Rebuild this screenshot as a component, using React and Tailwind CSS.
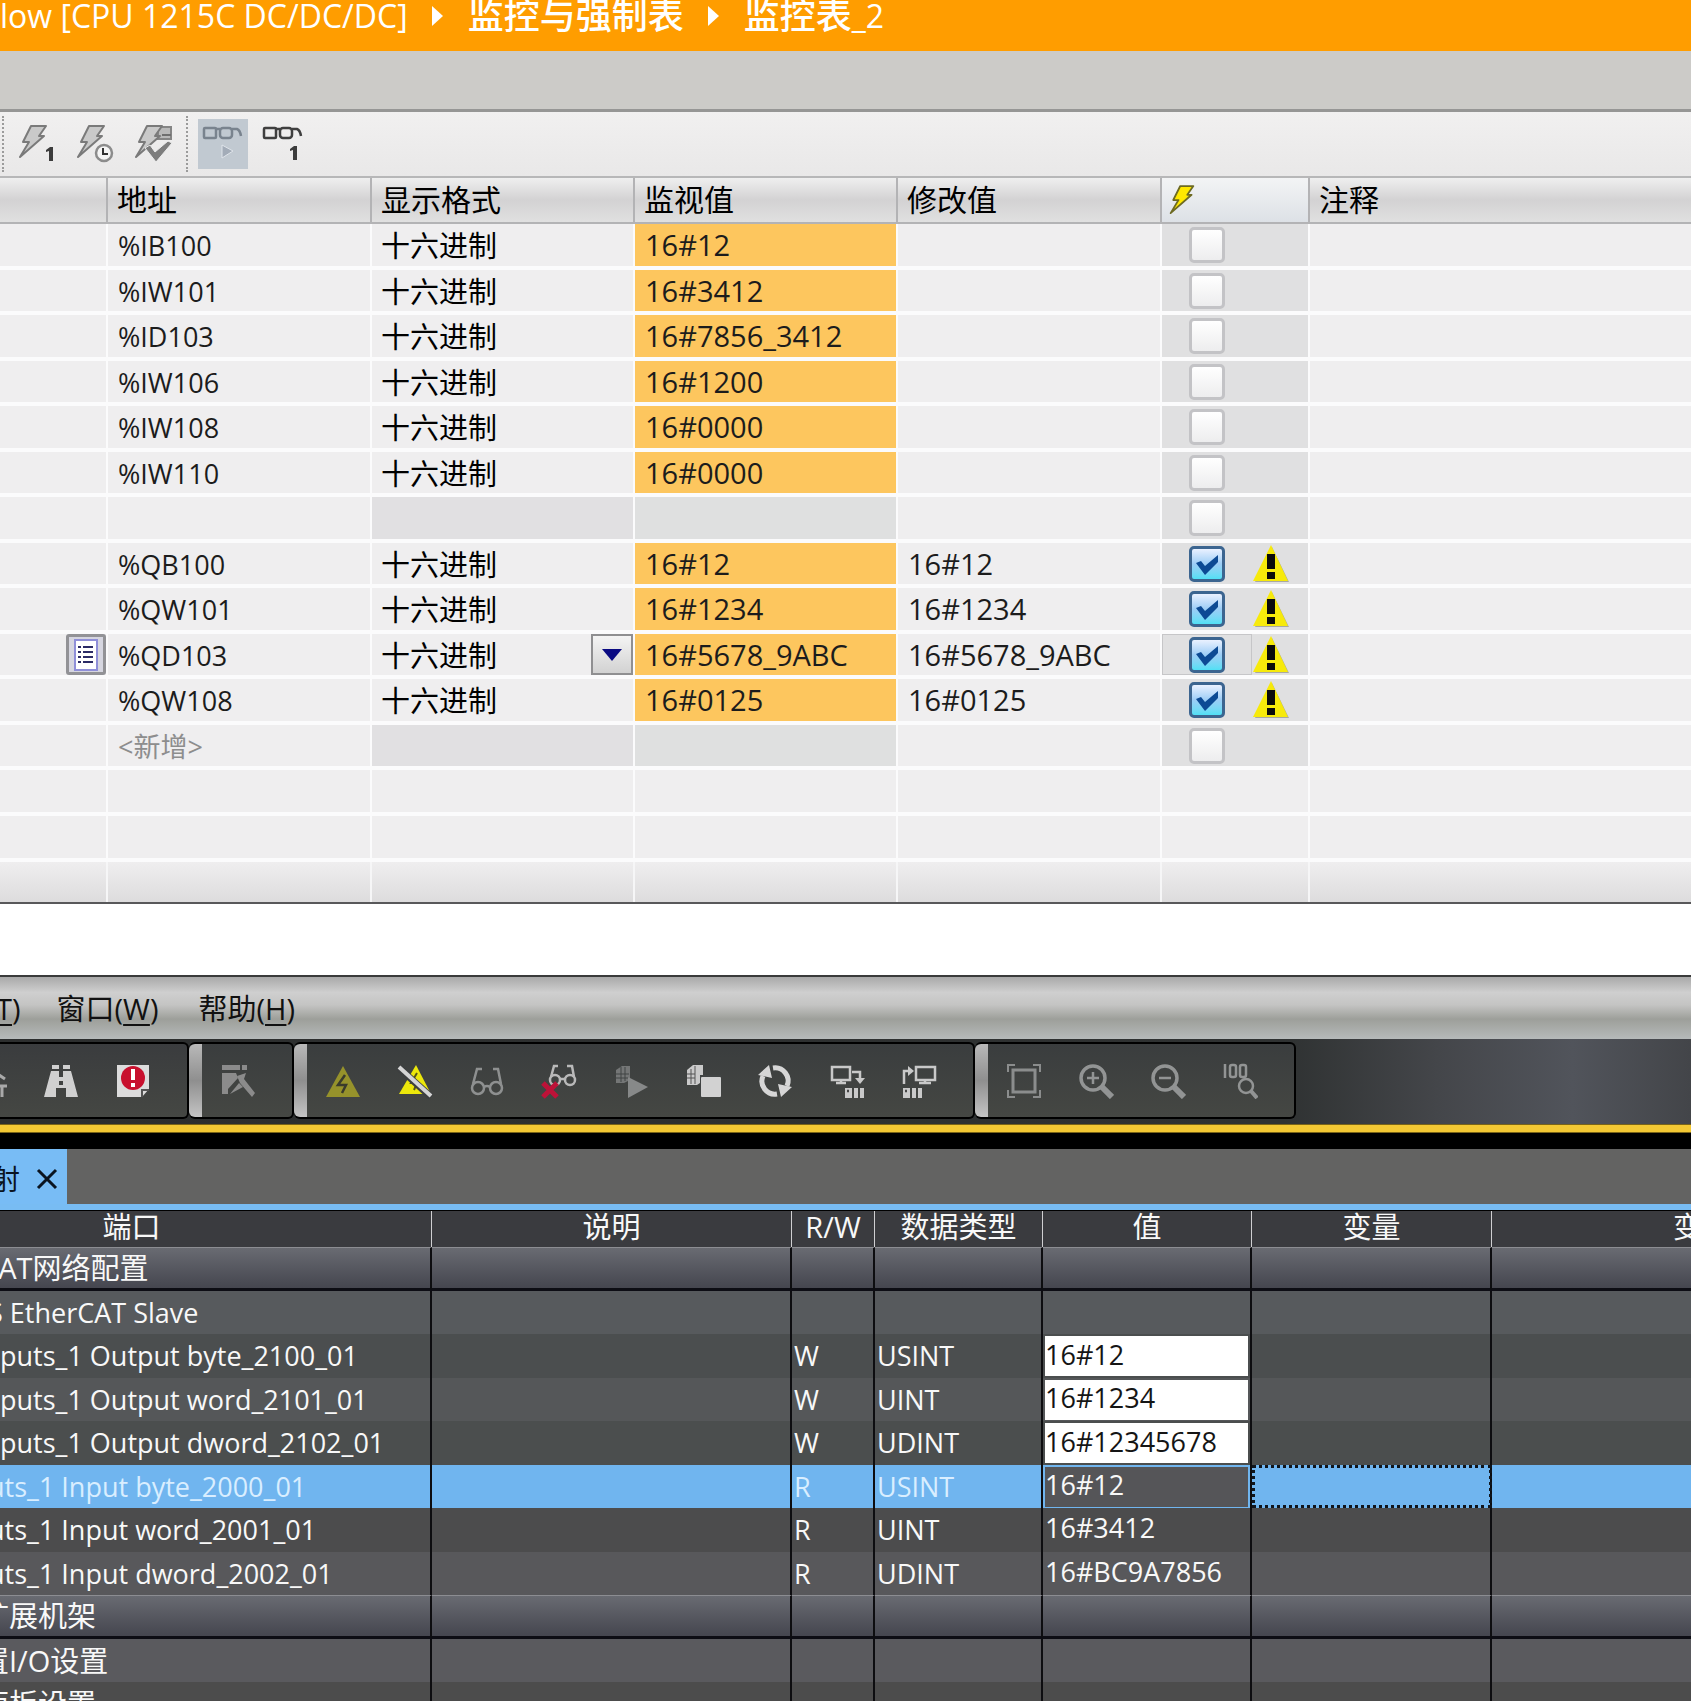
import React, { useState } from "react";

const WATCH_ROWS = [
	{ address: "%IB100", value: "16#12" },
	{ address: "%IW101", value: "16#3412" },
	{ address: "%ID103", value: "16#7856_3412" },
	{ address: "%IW106", value: "16#1200" },
	{ address: "%IW108", value: "16#0000" },
	{ address: "%IW110", value: "16#0000" },
	{ address: "", value: "" },
	{ address: "%QB100", value: "16#12", modify: "16#12" },
	{ address: "%QW101", value: "16#1234", modify: "16#1234" },
	{
		address: "%QD103",
		value: "16#5678_9ABC",
		modify: "16#5678_9ABC",
		active: true,
	},
	{ address: "%QW108", value: "16#0125", modify: "16#0125" },
	{ address: "<新增>", value: "", isNew: true },
];

const IO_ROWS = [
	{ port: "CAT网络配置", group: true, cjk: true },
	{ port: "S EtherCAT Slave", cut: true, bg: "bg-[#575a5d]" },
	{
		port: "puts_1 Output byte_2100_01",
		rw: "W",
		type: "USINT",
		value: "16#12",
		bg: "bg-[#4b4e4f]",
	},
	{
		port: "puts_1 Output word_2101_01",
		rw: "W",
		type: "UINT",
		value: "16#1234",
		bg: "bg-[#555759]",
	},
	{
		port: "puts_1 Output dword_2102_01",
		rw: "W",
		type: "UDINT",
		value: "16#12345678",
		bg: "bg-[#4b4e4e]",
	},
	{
		port: "uts_1 Input byte_2000_01",
		cut: true,
		rw: "R",
		type: "USINT",
		value: "16#12",
		bg: "bg-[#70b5ef]",
		selected: true,
	},
	{
		port: "uts_1 Input word_2001_01",
		cut: true,
		rw: "R",
		type: "UINT",
		value: "16#3412",
		bg: "bg-[#4c4c4d]",
	},
	{
		port: "uts_1 Input dword_2002_01",
		cut: true,
		rw: "R",
		type: "UDINT",
		value: "16#BC9A7856",
		bg: "bg-[#58585b]",
	},
	{ port: "扩展机架", group: true, cjk: true },
	{ port: "置I/O设置", cjk: true, bg: "bg-[#5a5a5e]" },
	{ port: "面板设置", cjk: true, bg: "bg-[#4c4c4c]" },
];

const BOLT = "M14 2 L29 2 L22 12 L27 12 L3 33 L12 18 L6 18 Z";

const Bolt = ({ fill = "#c9c9c9", stroke = "#7a7a7a" }) => (
	<path
		d={BOLT}
		fill={fill}
		stroke={stroke}
		strokeWidth="2"
		strokeLinejoin="round"
	/>
);

const One = ({ x, y }) => (
	<path
		d={`M${x} ${y + 3} L${x + 4} ${y} H${x + 7} V${y + 14} H${x + 3} V${y + 4} L${x} ${y + 5} Z`}
		fill="#3c3c3c"
	/>
);

const ModifyOnceIcon = () => (
	<svg width="40" height="40" viewBox="0 0 40 40">
		<Bolt />
		<One x={29} y={23} />
	</svg>
);

const ModifyTriggerIcon = () => (
	<svg width="40" height="40" viewBox="0 0 40 40">
		<Bolt />
		<circle cx="29" cy="29" r="8" fill="#f5f5f5" stroke="#8c8c8c" strokeWidth="2.5" />
		<path d="M28 24 V30 H33" fill="none" stroke="#333" strokeWidth="2" />
	</svg>
);

const EnableOutputsIcon = () => (
	<svg width="40" height="40" viewBox="0 0 40 40">
		<path d="M25 3 H38 V15 H25 Z" fill="#b9b9b9" stroke="#858585" strokeWidth="2" />
		<path d="M29 11 H38" stroke="#6f6f6f" strokeWidth="2" />
		<Bolt />
		<path d="M12 24 L17 21 L22 28 L35 17 L39 19 L23 38 Z" fill="#7d7d7d" stroke="#ececec" />
	</svg>
);

const Specs = ({ color }) => (
	<g fill="none" stroke={color} strokeWidth="2.5">
		<rect x="2" y="3" width="12" height="10" rx="1" />
		<path d="M14 4 H18" />
		<rect x="18" y="3" width="12" height="10" rx="3" />
		<path d="M30 4 H35 Q38 5 39 11" />
	</g>
);

const MonitorAllIcon = () => (
	<svg width="42" height="38" viewBox="0 0 42 38">
		<Specs color="#79838e" />
		<path d="M20 20 L31 26 L20 33 Z" fill="#a3acb8" stroke="#dfe4ea" />
	</svg>
);

const MonitorOnceIcon = () => (
	<svg width="42" height="38" viewBox="0 0 42 38">
		<Specs color="#3f3f3f" />
		<One x={28} y={21} />
	</svg>
);

const HeaderBoltIcon = () => (
	<svg width="28" height="36" viewBox="0 0 32 36">
		<Bolt fill="#ffe800" stroke="#6d6a22" />
	</svg>
);

const WarningIcon = () => (
	<svg width="38" height="40" viewBox="0 0 38 40">
		<path d="M20 3 L37 38 H3 Z" fill="#a9a9a0" />
		<path d="M19 1 L36 37 H1 Z" fill="#f7ea0b" />
		<path d="M15 10 H23 V25 H15 Z M15 28 H23 V35 H15 Z" fill="#0b0b0b" />
	</svg>
);

const CheckBox = ({ label, checked, onChange, active }) => (
	<label
		className={`flex h-full w-[90px] items-center border pl-[26px] ${
			active ? "border-[#c6c6c8]" : "border-transparent"
		}`}
	>
		<span className="relative block size-[36px]">
			<input
				type="checkbox"
				aria-label={label}
				checked={checked}
				onChange={onChange}
				className="block size-[36px] appearance-none rounded-[5px] border-[3px] border-[#c3c3c6] bg-linear-to-b from-white to-[#ededee] checked:border-[#3c6590] checked:from-[#eaf1ff] checked:via-[#9ccdf6] checked:to-[#4fe0f5]"
			/>
			{checked && (
				<svg
					className="pointer-events-none absolute inset-0"
					width="36"
					height="36"
					viewBox="0 0 36 36"
				>
					<path
						d="M7 17 L12 15 L16 20 L29 9 V16 L16 29 Z"
						fill="#0c4a94"
					/>
				</svg>
			)}
		</span>
	</label>
);

/* icons of the lower toolbar, all drawn on a 36px grid */
const TOOL_ICONS = {
	partial: (
		<path d="M28 12 L34 16 M26 23 H36 M31 23 V34" stroke="#a9a9a9" strokeWidth="3" />
	),
	find: (
		<path
			d="M9 2 H16 V6 H9 Z M20 2 H27 V6 H20 Z M8 8 H16 V14 H20 V8 H28 L35 34 H23 V25 H13 V34 H1 Z M16 18 V22 H20 V18 Z"
			fill="#d0d0d0"
			fillRule="evenodd"
		/>
	),
	error: (
		<g>
			<path d="M2 2 H34 V26 L27 34 H2 Z" fill="#dcdcdc" />
			<path d="M27 34 V27 H34" fill="none" stroke="#555" strokeWidth="2" />
			<circle cx="18" cy="15" r="12" fill="#c8102e" />
			<path d="M16 6 H20 V17 H16 Z M16 20 H20 V24 H16 Z" fill="#fff" />
		</g>
	),
	build: (
		<g fill="#8b8b8b">
			<path d="M2 2 H20 V7 H2 Z M22 2 H27 V7 H22 Z" />
			<path d="M2 10 H16 L18 15 L8 26 V31 H2 Z" />
			<path d="M10 31 L19 20 L23 24 Z" />
			<path d="M17 13 L26 10 L24 16 L35 30 L32 34 L20 20 Z" />
		</g>
	),
	online: (
		<g>
			<path d="M18 3 L35 34 H1 Z" fill="#96922b" />
			<path d="M20 12 L13 22 H21 L17 30" fill="none" stroke="#3a3b2c" strokeWidth="2.5" />
		</g>
	),
	offline: (
		<g>
			<path d="M19 2 L34 31 H2 Z" fill="#ece70b" />
			<path d="M20 10 L14 20 H20 L17 27" fill="none" stroke="#55551a" strokeWidth="2" />
			<path d="M1 4 L34 34" stroke="#3d3f40" strokeWidth="7" />
			<path d="M2 4 L34 33" stroke="#d5d5d5" strokeWidth="4" />
		</g>
	),
	monitor: (
		<g fill="none" stroke="#8e9090" strokeWidth="2.5">
			<circle cx="9" cy="25" r="6" />
			<circle cx="27" cy="25" r="6" />
			<path d="M15 24 Q18 22 21 24 M4 21 L8 6 H13 M32 21 L29 6 H24" />
		</g>
	),
	monitorStop: (
		<g fill="none">
			<g stroke="#b9b9b9" strokeWidth="2.5">
				<circle cx="14" cy="17" r="5" />
				<circle cx="29" cy="17" r="5" />
				<path d="M19 16 H24 M10 14 L13 3 H17 M33 14 L31 3 H26" />
			</g>
			<path d="M2 20 L16 34 M16 20 L2 34" stroke="#bd1238" strokeWidth="5" />
		</g>
	),
	run: (
		<g>
			<path d="M3 7 L9 3 H17 V17 L11 20 H3 Z" fill="#747676" />
			<path d="M3 11 H16 M3 15 H16 M8 4 V19 M12 4 V18" stroke="#414444" />
			<path d="M15 14 V35 L35 24 Z" fill="#878989" />
		</g>
	),
	stop: (
		<g>
			<path d="M2 7 L8 2 H18 V18 L12 22 H2 Z" fill="#cacaca" />
			<path d="M2 11 H10 M2 15 H10 M6 6 V21 M10 3 V21" stroke="#555" />
			<rect x="15" y="12" width="22" height="22" fill="#414444" />
			<rect x="16" y="14" width="20" height="20" rx="1" fill="#d2d2d2" />
		</g>
	),
	sync: (
		<g>
			<g fill="none" stroke="#d6d6d6" strokeWidth="5">
				<path d="M16 5 A13 13 0 0 1 30 23" />
				<path d="M20 31 A13 13 0 0 1 6 13" />
			</g>
			<path d="M21 21 L35 24 L24 34 Z M15 15 L1 12 L12 2 Z" fill="#d6d6d6" />
		</g>
	),
	download: (
		<g fill="none" stroke="#c9c9c9" strokeWidth="2.5">
			<rect x="3" y="4" width="18" height="13" />
			<path d="M12 17 V20 M7 20 H17 M23 9 H31 V18" />
			<path d="M26 15 H36 L31 21 Z" fill="#c9c9c9" stroke="none" />
			<path d="M16 25 H23 V35 H16 Z M25 25 H29 V35 H25 Z M31 25 H35 V35 H31 Z" fill="#c9c9c9" stroke="none" />
			<path d="M18 28 H20" stroke="#444" />
		</g>
	),
	upload: (
		<g fill="none" stroke="#c9c9c9" strokeWidth="2.5">
			<rect x="15" y="4" width="19" height="13" />
			<path d="M24 17 V20 M18 20 H30 M3 21 V8 H8" />
			<path d="M7 3 V13 L13 8 Z" fill="#c9c9c9" stroke="none" />
			<path d="M2 25 H9 V35 H2 Z M11 25 H15 V35 H11 Z M17 25 H21 V35 H17 Z" fill="#c9c9c9" stroke="none" />
			<path d="M4 28 H6" stroke="#444" />
		</g>
	),
	fit: (
		<g fill="none" stroke="#8b8d8d">
			<rect x="7" y="7" width="22" height="22" strokeWidth="3" />
			<path d="M2 9 V2 H9 M27 2 H34 V9 M34 27 V34 H27 M9 34 H2 V27" strokeWidth="2" />
		</g>
	),
	zoomIn: (
		<g fill="none" stroke="#929494">
			<circle cx="15" cy="15" r="12" strokeWidth="3.5" />
			<path d="M9 15 H21 M15 9 V21" strokeWidth="2.5" />
			<path d="M24 24 L34 34" strokeWidth="6" />
		</g>
	),
	zoomOut: (
		<g fill="none" stroke="#929494">
			<circle cx="15" cy="15" r="12" strokeWidth="3.5" />
			<path d="M9 15 H21" strokeWidth="2.5" />
			<path d="M24 24 L34 34" strokeWidth="6" />
		</g>
	),
	zoomFull: (
		<g fill="none" stroke="#929494" strokeWidth="2.5">
			<path d="M3 1 V15" />
			<rect x="8" y="2" width="6" height="12" rx="2" />
			<rect x="18" y="2" width="6" height="12" rx="2" />
			<circle cx="24" cy="23" r="7" />
			<path d="M29 28 L35 35" strokeWidth="4" />
		</g>
	),
};

const TOOL_GROUPS = [
	[["build", "编译"]],
	[
		["online", "在线"],
		["offline", "离线"],
		["monitor", "监视"],
		["monitorStop", "停止监视"],
		["run", "运行模式"],
		["stop", "编程模式"],
		["sync", "同步"],
		["download", "传送到控制器"],
		["upload", "从控制器传送"],
	],
	[
		["fit", "适合窗口"],
		["zoomIn", "放大"],
		["zoomOut", "缩小"],
		["zoomFull", "原始大小"],
	],
];

const ToolButton = ({ name, label }) => (
	<button
		type="button"
		aria-label={label}
		className="flex h-full w-[72px] shrink-0 items-center justify-center"
	>
		<svg width="36" height="36" viewBox="0 0 36 36">
			{TOOL_ICONS[name]}
		</svg>
	</button>
);

const Arrow = () => (
	<svg className="mx-6 shrink-0" width="12" height="20" viewBox="0 0 12 20">
		<path d="M0 0 L11 10 L0 20 Z" fill="#fff" />
	</svg>
);

const Dots = () => (
	<span className="h-[56px] w-0 shrink-0 border-l-2 border-dotted border-[#9b9b9b]" />
);

const WATCH_TD = "border-r-2 border-b-4 border-[#fbfbfc] p-0 last:border-r-0";
const WATCH_TH =
	"border-r-2 border-b-2 border-[#b3b3b5] bg-linear-to-b from-[#efefef] via-[#d3d2d3] to-[#e0e0e0] p-0 pl-[9px] text-left text-[30px] font-normal last:border-r-0";

const WatchTable = () => {
	const [checks, setChecks] = useState(
		WATCH_ROWS.map((row) => Boolean(row.modify))
	);

	const toggle = (index) =>
		setChecks(checks.map((c, i) => (i === index ? !c : c)));

	return (
		<table className="w-full table-fixed border-separate border-spacing-0 whitespace-nowrap text-[#1c1c1c]">
			<colgroup>
				<col className="w-[108px]" />
				<col className="w-[264px]" />
				<col className="w-[263px]" />
				<col className="w-[263px]" />
				<col className="w-[264px]" />
				<col className="w-[148px]" />
				<col />
			</colgroup>
			<thead>
				<tr className="h-[46px] leading-10 text-black">
					<th className={WATCH_TH} />
					<th className={WATCH_TH}>地址</th>
					<th className={WATCH_TH}>显示格式</th>
					<th className={WATCH_TH}>监视值</th>
					<th className={WATCH_TH}>修改值</th>
					<th className="border-r-2 border-b-2 border-[#b3b3b5] bg-linear-to-b from-[#f3f4f5] to-[#dde1e6] p-0 pl-[6px]">
						<HeaderBoltIcon />
					</th>
					<th className={WATCH_TH}>注释</th>
				</tr>
			</thead>
			<tbody>
				{WATCH_ROWS.map((row, i) => (
					<tr key={i} className="odd:h-[46px] even:h-[45px]">
						<td className={WATCH_TD}>
							{row.active && (
								<button
									type="button"
									aria-label="选择变量"
									className="ml-auto flex h-[41px] w-[40px] items-center justify-center rounded-[3px] border-[3px] border-[#929296] bg-[#d6d6e0]"
								>
									<svg width="24" height="32" viewBox="0 0 24 32">
										<path d="M1 1 H23 V31 H1 Z" fill="#fff" stroke="#8f8fd8" strokeWidth="2" />
										<path
											d="M4 8 H7 M9 8 H19 M4 13 H7 M9 13 H19 M4 18 H7 M9 18 H19 M4 23 H7 M9 23 H19"
											stroke="#2b2b66"
											strokeWidth="2"
										/>
									</svg>
								</button>
							)}
						</td>
						<td
							className={`${WATCH_TD} pt-[2px] pl-[10px] text-[27px] leading-9 ${
								row.isNew ? "text-[#8d8d8d]" : ""
							}`}
						>
							{row.address}
						</td>
						<td
							className={`${WATCH_TD} text-[29px] leading-9 ${
								row.value ? "" : "bg-[#e1e0e2]"
							}`}
						>
							{row.active ? (
								<div className="relative">
									<select
										aria-label="显示格式"
										className="block h-[41px] w-full appearance-none pt-[2px] pl-[9px] text-black"
									>
										<option>十六进制</option>
									</select>
									<span className="pointer-events-none absolute top-0 right-0 flex h-[41px] w-[42px] items-center justify-center border-2 border-[#8f8f91] bg-linear-to-b from-[#f4f4f4] to-[#d2d2d2]">
										<svg width="20" height="12" viewBox="0 0 20 12">
											<path d="M0 0 H20 L10 12 Z" fill="#0a0a82" />
										</svg>
									</span>
								</div>
							) : (
								<div className="pt-[2px] pl-[9px] text-black">
									{row.value && "十六进制"}
								</div>
							)}
						</td>
						<td
							className={`${WATCH_TD} pl-[10px] text-[29px] leading-9 ${
								row.value ? "bg-[#fdc65e]" : "bg-[#dfe0e0]"
							}`}
						>
							{row.value}
						</td>
						<td className={`${WATCH_TD} pl-[10px] text-[29px] leading-9`}>
							{row.modify}
						</td>
						<td className={`${WATCH_TD} bg-[#e0e0e1]`}>
							<div className="flex h-[41px] items-center">
								<CheckBox
									label={`修改 ${row.address}`}
									checked={checks[i]}
									onChange={() => toggle(i)}
									active={row.active}
								/>
								{row.modify && <WarningIcon />}
							</div>
						</td>
						<td className={WATCH_TD} />
					</tr>
				))}
				{[0, 1, 2].map((n) => (
					<tr key={n} className={n === 2 ? "h-[40px]" : "h-[46px]"}>
						{[0, 1, 2, 3, 4, 5, 6].map((c) => (
							<td
								key={c}
								className={
									n === 2
										? "border-r-2 border-[#f6f6f7] bg-linear-to-b from-[#efeeef] to-[#dddcdd] last:border-r-0"
										: WATCH_TD
								}
							/>
						))}
					</tr>
				))}
			</tbody>
		</table>
	);
};

const IO_TH =
	"border-r border-[#cfcfd2] p-0 align-top text-[29px] leading-8 font-normal";
const IO_TD = "border-r-2 border-[#0d0d10] p-0";
const GROUP_TD =
	"border-t border-t-[#8c8d92] border-b-3 border-b-[#0d0d14] bg-linear-to-b from-[#696b72] to-[#45464f]";

const IoTable = () => (
	<table className="w-[1971px] table-fixed border-separate border-spacing-0 whitespace-nowrap text-[27px] leading-9 text-[#f8f8f8]">
		<colgroup>
			<col className="w-[432px]" />
			<col className="w-[360px]" />
			<col className="w-[83px]" />
			<col className="w-[168px]" />
			<col className="w-[209px]" />
			<col className="w-[240px]" />
			<col />
		</colgroup>
		<thead>
			<tr className="h-[36px] bg-[#3a3b3f]">
				<th className={`${IO_TH} pr-[168px]`}>端口</th>
				<th className={IO_TH}>说明</th>
				<th className={IO_TH}>R/W</th>
				<th className={IO_TH}>数据类型</th>
				<th className={IO_TH}>值</th>
				<th className={IO_TH}>变量</th>
				<th className={IO_TH}>变量注释</th>
			</tr>
		</thead>
		<tbody>
			{IO_ROWS.map((row) => {
				const td = row.group ? `${IO_TD} ${GROUP_TD}` : IO_TD;
				return (
					<tr
						key={row.port}
						className={`odd:h-[44px] even:h-[43px] ${row.bg || ""} ${
							row.selected ? "text-[#d9eeff]" : ""
						}`}
					>
						<td
							className={`${td} ${row.cjk ? "-indent-5 text-[29px]" : ""} ${
								row.cut ? "-indent-3" : ""
							}`}
						>
							{row.port}
						</td>
						<td className={td} />
						<td className={`${td} pl-[2px]`}>{row.rw}</td>
						<td className={`${td} pl-[2px]`}>{row.type}</td>
						<td className={td}>
							{row.rw === "W" && (
								<input
									type="text"
									aria-label={row.port}
									defaultValue={row.value}
									className="mx-[2px] block h-[40px] w-[203px] bg-white pb-1 text-[#151515]"
								/>
							)}
							{row.rw === "R" && (
								<div
									className={`mx-[2px] h-[40px] w-[203px] text-[#f8f8f8] ${
										row.selected ? "bg-[#555558]" : ""
									}`}
								>
									{row.value}
								</div>
							)}
						</td>
						<td
							className={`${td} ${
								row.selected
									? "outline-3 -outline-offset-3 outline-dotted outline-[#10151c]"
									: ""
							}`}
						/>
						<td className={td} />
					</tr>
				);
			})}
		</tbody>
	</table>
);

const App = () => {
	return (
		<div className="h-screen overflow-hidden bg-[#4c4c4c] font-['Open_Sans','Noto_Sans_CJK_SC',sans-serif]">
			{/* Watch table window */}
			<section className="border-b-2 border-[#58585a] bg-[#efeeef]">
				<nav className="h-[51px] bg-[#ff9d00] whitespace-nowrap text-white">
					<div className="flex h-[32px] items-center text-[32px] leading-8">
						<span>low [CPU 1215C DC/DC/DC]</span>
						<Arrow />
						<span className="text-[36px] font-medium">监控与强制表</span>
						<Arrow />
						<span className="text-[36px] font-medium">监控表</span>
						<span>_2</span>
					</div>
				</nav>
				<div className="h-[61px] border-b-3 border-[#969695] bg-[#cccbc8]" />
				<div className="flex h-[66px] items-center border-b-2 border-[#b7b7b8] bg-linear-to-b from-[#f1f0f0] to-[#e9e8e8] pl-[2px]">
					<Dots />
					<div className="flex px-1">
						<button type="button" aria-label="立即修改一次" className="flex w-[58px] justify-center">
							<ModifyOnceIcon />
						</button>
						<button type="button" aria-label="触发修改" className="flex w-[58px] justify-center">
							<ModifyTriggerIcon />
						</button>
						<button type="button" aria-label="启用外设输出" className="flex w-[58px] justify-center">
							<EnableOutputsIcon />
						</button>
					</div>
					<Dots />
					<button
						type="button"
						aria-label="全部监视"
						className="ml-[10px] flex h-[50px] w-[50px] items-center justify-center bg-[#c1c9d1]"
					>
						<MonitorAllIcon />
					</button>
					<button type="button" aria-label="立即监视一次" className="ml-[10px] flex h-[50px] w-[50px] items-center justify-center">
						<MonitorOnceIcon />
					</button>
				</div>
				<WatchTable />
			</section>

			<div className="h-[71px] bg-white" />

			{/* Controller I/O window */}
			<section className="border-t-2 border-[#3a3b3b]">
				<nav className="flex h-[62px] items-center bg-[linear-gradient(to_bottom,#a9a9a9,#cfcfcf_25%,#c4c4c3_45%,#9d9f9a_68%,#b6baba)] pt-[2px] text-[29px] whitespace-nowrap text-[#111]">
					<button type="button" className="mr-9 -indent-1">
						<u className="underline-offset-4">T</u>)
					</button>
					<button type="button" className="mr-10">
						窗口(<u className="underline-offset-4">W</u>)
					</button>
					<button type="button">
						帮助(<u className="underline-offset-4">H</u>)
					</button>
				</nav>

				<div className="flex h-[85px] bg-[linear-gradient(to_right,#2c2e2e,#2f3232_76%,#44464a_85%,#51545b_93%,#434549)] pt-[3px]">
					<div className="flex h-[77px] w-[189px] justify-end overflow-hidden rounded-r-md border-2 border-l-0 border-black bg-linear-to-b from-[#3a3c3e] to-[#454743] pr-[18px]">
						<ToolButton name="partial" label="替换" />
						<ToolButton name="find" label="查找" />
						<ToolButton name="error" label="错误" />
					</div>
					{TOOL_GROUPS.map((tools, i) => (
						<div
							key={i}
							className="flex h-[77px] overflow-hidden rounded-md border-2 border-l-0 border-black bg-linear-to-b from-[#3a3d3e] to-[#454743] pr-[18px]"
						>
							<span className="w-[13px] shrink-0 rounded-l-md bg-linear-to-b from-[#b9b9b9] via-[#8f8f8f] to-[#c4c4c4]" />
							{tools.map(([name, label]) => (
								<ToolButton key={name} name={name} label={label} />
							))}
						</div>
					))}
				</div>
				<div className="h-[9px] border-y border-[#7a6418] bg-[#f3c834]" />
				<div className="h-[16px] bg-black" />

				<div className="flex h-[61px] items-stretch border-b-6 border-[#78bcf3] bg-[#636362]">
					<div className="flex w-[67px] items-center justify-between overflow-hidden bg-[#78bcf5] pt-1 pr-[9px] text-[28px] text-[#0a1420]">
						<span className="-indent-2">射</span>
						<button type="button" aria-label="关闭">
							<svg width="22" height="22" viewBox="0 0 22 22">
								<path d="M2 2 L20 20 M20 2 L2 20" stroke="#0a1420" strokeWidth="3" />
							</svg>
						</button>
					</div>
				</div>
				<div className="overflow-hidden border-t border-black">
					<IoTable />
				</div>
			</section>
		</div>
	);
};

export default App;
